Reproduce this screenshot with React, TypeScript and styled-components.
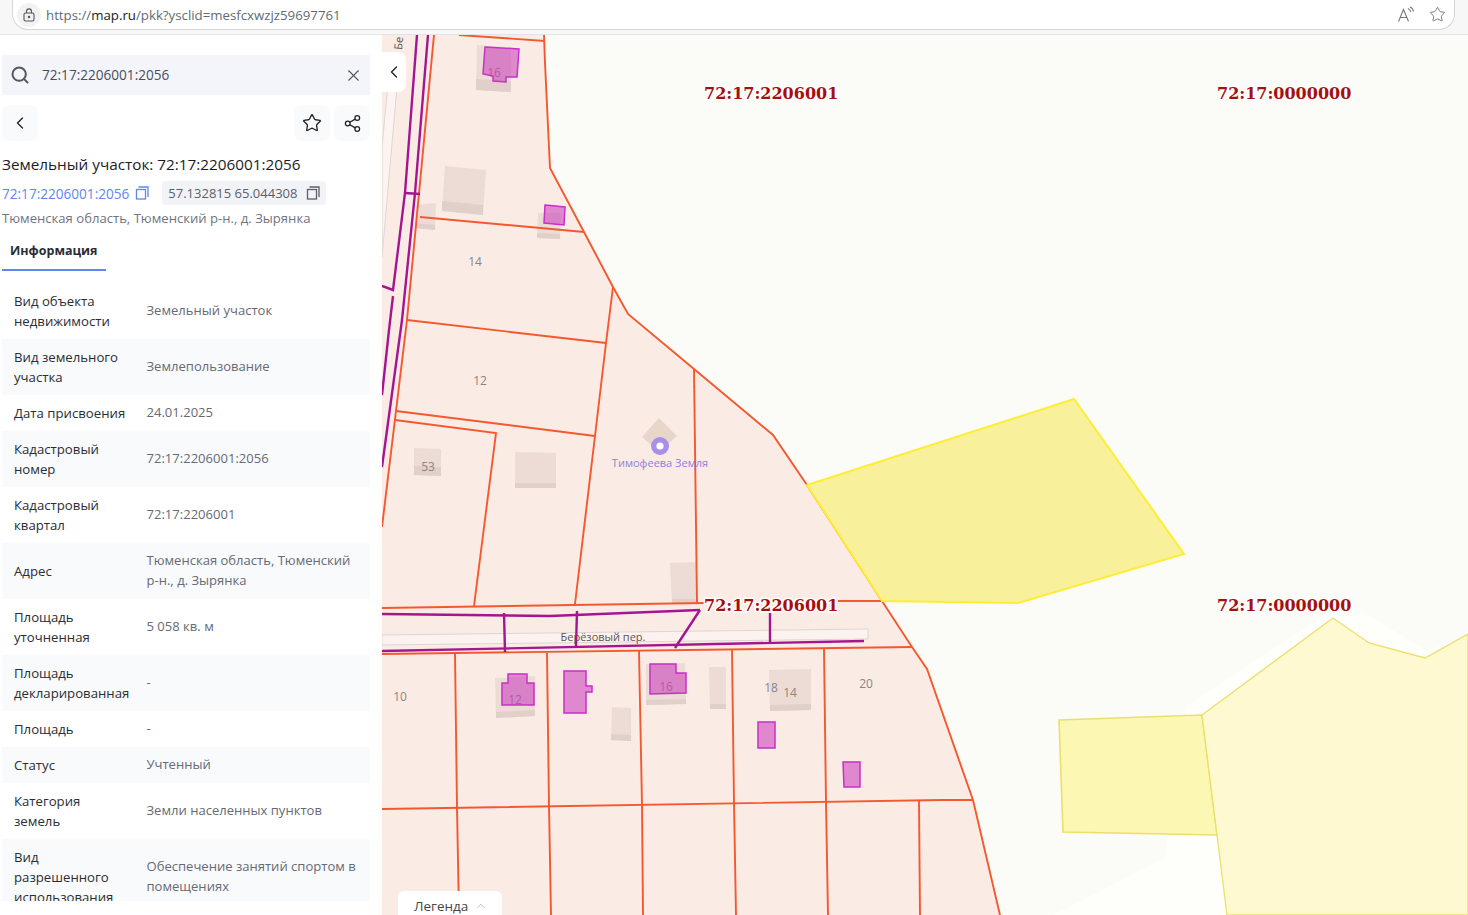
import React from "react";
import styled, { createGlobalStyle } from "styled-components";
import { ChevronLeft, ChevronUp, Search, Share2, Star, X } from "lucide-react";

const PANEL_FONT = `"Open Sans", "Noto Sans", sans-serif`;

const ORANGE_LINES = [
    "544,35 545,63 550,168 584,232 613,287 628,314 694,369 773,435 807,485 882,601 912,647 927,669 973,800 1000,915",
    "459,35 545,41",
    "434,35 407,320 396,411 382,527",
    "420,217 584,232",
    "613,287 606,343 595,436 575,604",
    "407,320 606,343",
    "396,411 595,436",
    "395,420 496,433 474,606",
    "694,369 697,603",
    "382,608 704,603",
    "838,601 881,601",
    "382,654 912,647",
    "382,809 942,800 973,800",
    "455,654 457,807 459,915",
    "547,653 549,806 551,915",
    "639,651 642,805 643,915",
    "732,650 734,803 736,915",
    "824,649 826,802 828,915",
    "919,801 920,915",
];

const PURPLE_LINES = [
    "417,35 405,193 393,290 382,286",
    "393,296 389,330 382,395",
    "428,35 415,193 402,320 382,467",
    "405,193 420,194",
    "382,614 550,616 700,610",
    "382,651 864,641",
    "504,613 505,652",
    "577,611 576,646",
    "770,613 770,642",
    "700,610 675,648",
];

const BUILDINGS = [
    { pts: [[477, 45], [511, 47], [511, 92], [476, 90]], strip: 11 },
    { pts: [[445, 166], [486, 170], [483, 215], [442, 211]], strip: 10 },
    { pts: [[416, 205], [436, 203], [435, 230], [415, 228]], strip: 5 },
    { pts: [[538, 213], [561, 213], [560, 239], [537, 238]], strip: 5 },
    { pts: [[414, 448], [441, 449], [441, 476], [414, 475]], strip: 9 },
    { pts: [[515, 452], [556, 453], [556, 488], [515, 488]], strip: 5 },
    { pts: [[670, 563], [696, 562], [697, 603], [672, 603]], strip: 4 },
    { pts: [[495, 678], [535, 676], [535, 716], [496, 718]], strip: 6 },
    { pts: [[612, 707], [631, 708], [631, 741], [611, 740]], strip: 6 },
    { pts: [[646, 664], [685, 663], [686, 704], [646, 705]], strip: 5 },
    { pts: [[709, 667], [726, 667], [726, 709], [710, 709]], strip: 5 },
    { pts: [[769, 670], [811, 669], [811, 710], [770, 711]], strip: 6 },
];

const PURPLE_SHAPES = [
    "485,47 519,49 517,77 506,77 506,82 493,81 493,76 483,74",
    "545,205 565,207 564,225 544,223",
    "508,674 527,674 527,683 534,683 534,705 502,705 502,683 508,683",
    "564,671 586,671 586,686 592,686 592,692 586,692 586,713 564,713",
    "650,664 676,664 676,673 686,673 686,693 650,694",
    "758,722 775,722 775,748 758,748",
    "843,762 860,762 860,787 844,787",
];

const HOUSE_NUMBERS = [
    { x: 494, y: 77, t: "16" },
    { x: 475, y: 266, t: "14" },
    { x: 480, y: 385, t: "12" },
    { x: 428, y: 471, t: "53" },
    { x: 400, y: 701, t: "10" },
    { x: 515, y: 704, t: "12" },
    { x: 666, y: 691, t: "16" },
    { x: 771, y: 692, t: "18" },
    { x: 790, y: 697, t: "14" },
    { x: 866, y: 688, t: "20" },
];

const QUARTER_LABELS = [
    { x: 704, y: 99, t: "72:17:2206001" },
    { x: 1217, y: 99, t: "72:17:0000000" },
    { x: 704, y: 611, t: "72:17:2206001" },
    { x: 1217, y: 611, t: "72:17:0000000" },
];

const INFO_ROWS = [
    { label: "Вид объекта недвижимости", value: "Земельный участок" },
    { label: "Вид земельного участка", value: "Землепользование" },
    { label: "Дата присвоения", value: "24.01.2025" },
    { label: "Кадастровый номер", value: "72:17:2206001:2056" },
    { label: "Кадастровый квартал", value: "72:17:2206001" },
    { label: "Адрес", value: "Тюменская область, Тюменский р-н., д. Зырянка" },
    { label: "Площадь уточненная", value: "5 058 кв. м" },
    { label: "Площадь декларированная", value: "-" },
    { label: "Площадь", value: "-" },
    { label: "Статус", value: "Учтенный" },
    { label: "Категория\nземель", value: "Земли населенных пунктов" },
    { label: "Вид\nразрешенного\nиспользования", value: "Обеспечение занятий спортом в помещениях" },
];

const CopyIcon = () => (
    <svg width="14" height="14" viewBox="0 0 14 14" fill="none" stroke="currentColor" strokeWidth="1.3">
        <rect x="1.5" y="3.5" width="9" height="9.5" />
        <path d="M3.5 1h9.5v10" />
    </svg>
);

const ReadAloudIcon = () => (
    <svg width="18" height="18" viewBox="0 0 18 18" fill="none" stroke="#777" strokeWidth="1.1">
        <path d="M1.5 15.5 6.5 3.5 11.5 15.5M3.2 11.5h6.6" />
        <path d="M11 2.5c1.5.5 2.5 2 2.7 3.5M13 1c2 .8 3.3 2.5 3.5 4.5" />
    </svg>
);

const LockIcon = () => (
    <svg width="14" height="14" viewBox="0 0 14 14" fill="none" stroke="#555" strokeWidth="1.1">
        <rect x="2" y="5" width="10" height="8" rx="1.5" />
        <path d="M4.5 5V3.4a2.5 2.5 0 0 1 5 0V5" />
        <circle cx="7" cy="9" r="0.7" fill="#555" />
    </svg>
);

const MapCanvas = () => (
    <MapSvg viewBox="382 35 1086 880">
        <rect x="382" y="35" width="1086" height="880" fill="#fbfcf7" />
        <polygon
            points="1186,706 1340,605 1352,605 1425,650 1468,640 1468,915 1053,915 1165,858"
            fill="#fefefa"
        />
        <polygon
            points="382,35 544,35 545,63 550,168 584,232 613,287 628,314 694,369 773,435 807,485 882,601 912,647 927,669 973,800 1000,915 382,915"
            fill="#fbebe5"
        />
        <polygon
            points="397,87 382,257 382,147 389,73"
            fill="#fdf3f0"
            stroke="#ddd6d2"
            strokeWidth="1"
        />
        <polygon
            points="382,635 868,629 868,639 382,645"
            fill="#fcf2ef"
            stroke="#ddd6d2"
            strokeWidth="1"
        />
        {BUILDINGS.map(({ pts, strip }, i) => {
            const [, , c, d] = pts;
            return (
                <g key={i}>
                    <polygon points={pts.map((p) => p.join(",")).join(" ")} fill="#ecdcd5" />
                    <polygon
                        points={`${d[0]},${d[1] - strip} ${c[0]},${c[1] - strip} ${c[0]},${c[1]} ${d[0]},${d[1]}`}
                        fill="#e0d0c9"
                    />
                </g>
            );
        })}
        <polygon points="659,418 677,436 659,452 642,437" fill="#e9d6ca" />
        {ORANGE_LINES.map((pts) => (
            <polyline key={pts} points={pts} fill="none" stroke="#f4582f" strokeWidth="1.9" />
        ))}
        <polygon
            points="807,485 1074,399 1184,554 1018,603 882,601"
            fill="#f9f09b"
            stroke="#fdee32"
            strokeWidth="2"
        />
        <polygon
            points="1059,720 1202,715 1217,835 1063,832"
            fill="#fcf7b3"
            stroke="#ecdf6c"
            strokeWidth="1.6"
        />
        <polygon
            points="1202,715 1333,618 1369,643 1425,658 1468,634 1468,915 1227,915"
            fill="#fef9d0"
            stroke="#ecdf6c"
            strokeWidth="1.3"
        />
        {PURPLE_LINES.map((pts) => (
            <polyline key={pts} points={pts} fill="none" stroke="#a3168f" strokeWidth="2.4" />
        ))}
        {HOUSE_NUMBERS.map((n) => (
            <HouseNumber key={`${n.x}-${n.y}`} x={n.x} y={n.y} textAnchor="middle">
                {n.t}
            </HouseNumber>
        ))}
        {PURPLE_SHAPES.map((pts) => (
            <polygon key={pts} points={pts} fill="#cc3fbb" fillOpacity="0.58" stroke="#c92fc9" strokeWidth="1.5" />
        ))}
        <StreetName x="603" y="641" textAnchor="middle">
            Берёзовый пер.
        </StreetName>
        <StreetName x="402" y="50" transform="rotate(-85 402 50)">
            Бе
        </StreetName>
        <circle cx="660" cy="446" r="9" fill="#a88fe8" />
        <circle cx="660" cy="446" r="3.6" fill="#fff" />
        <PlaceName x="660" y="467" textAnchor="middle">
            Тимофеева Земля
        </PlaceName>
        {QUARTER_LABELS.map((l) => (
            <QuarterLabel key={`${l.x}-${l.y}`} x={l.x} y={l.y}>
                {l.t}
            </QuarterLabel>
        ))}
    </MapSvg>
);

export default function App() {
    return (
        <>
            <GlobalStyle />
            <Page>
                <BrowserBar>
                    <AddressPill>
                        <LockBadge>
                            <LockIcon />
                        </LockBadge>
                        <UrlText>
                            https://<UrlHost>map.ru</UrlHost>/pkk?ysclid=mesfcxwzjz59697761
                        </UrlText>
                        <PillActions>
                            <ReadAloudIcon />
                            <Star size={17} strokeWidth={1.2} color="#666" />
                        </PillActions>
                    </AddressPill>
                </BrowserBar>
                <Content>
                    <Sidebar>
                        <SearchBox>
                            <Search size={20} strokeWidth={2.4} color="#55585f" />
                            <SearchValue>72:17:2206001:2056</SearchValue>
                            <X size={19} strokeWidth={1.4} color="#55585f" />
                        </SearchBox>
                        <ActionRow>
                            <IconButton>
                                <ChevronLeft size={20} strokeWidth={1.6} />
                            </IconButton>
                            <ActionGroup>
                                <IconButton>
                                    <Star size={20} strokeWidth={1.6} />
                                </IconButton>
                                <IconButton>
                                    <Share2 size={19} strokeWidth={1.6} />
                                </IconButton>
                            </ActionGroup>
                        </ActionRow>
                        <Title>Земельный участок: 72:17:2206001:2056</Title>
                        <MetaRow>
                            <CadastreLink>
                                72:17:2206001:2056
                                <CopyIcon />
                            </CadastreLink>
                            <CoordsChip>
                                57.132815 65.044308
                                <CopyIcon />
                            </CoordsChip>
                        </MetaRow>
                        <AddressLine>Тюменская область, Тюменский р-н., д. Зырянка</AddressLine>
                        <TabBar>
                            <ActiveTab>Информация</ActiveTab>
                        </TabBar>
                        <InfoTable>
                            {INFO_ROWS.map((row, i) => (
                                <InfoRow key={row.label} $striped={i % 2 === 1}>
                                    <InfoLabel>{row.label}</InfoLabel>
                                    <InfoValue>{row.value}</InfoValue>
                                </InfoRow>
                            ))}
                        </InfoTable>
                    </Sidebar>
                    <MapArea>
                        <MapCanvas />
                        <CollapseButton>
                            <ChevronLeft size={20} strokeWidth={1.6} color="#222" />
                        </CollapseButton>
                        <LegendTab>
                            Легенда
                            <ChevronUp size={14} strokeWidth={1.6} color="#b4bccb" />
                        </LegendTab>
                    </MapArea>
                </Content>
            </Page>
        </>
    );
}

const GlobalStyle = createGlobalStyle`
    html, body {
        margin: 0;
        height: 100%;
        overflow: hidden;
        background: #fff;
    }
    #root {
        height: 100%;
    }
`;

const Page = styled.div`
    display: flex;
    flex-direction: column;
    height: 915px;
    font-family: ${PANEL_FONT};
`;

const BrowserBar = styled.div`
    height: 35px;
    flex: none;
    padding: 0 13px 4px 12px;
    box-sizing: border-box;
    background: #f7f7f7;
    border-bottom: 1px solid #e4e4e4;
    display: flex;
`;

const AddressPill = styled.div`
    flex: 1;
    display: flex;
    align-items: center;
    background: #fff;
    border: 1px solid #d6d6d6;
    border-top: none;
    border-radius: 0 0 16px 16px;
    padding: 0 8px 0 4px;
`;

const LockBadge = styled.div`
    width: 24px;
    height: 24px;
    border-radius: 50%;
    background: #f2f2f2;
    display: flex;
    align-items: center;
    justify-content: center;
`;

const UrlText = styled.div`
    margin-left: 5px;
    flex: 1;
    font-size: 13.25px;
    color: #5f6b76;
    font-family: "Open Sans", sans-serif;
`;

const UrlHost = styled.span`
    color: #1b1b1b;
`;

const PillActions = styled.div`
    display: flex;
    align-items: center;
    gap: 14px;
`;

const Content = styled.div`
    flex: 1;
    display: flex;
    min-height: 0;
`;

const Sidebar = styled.aside`
    width: 382px;
    flex: none;
    box-sizing: border-box;
    padding: 20px 12px 0 2px;
    display: flex;
    flex-direction: column;
    background: #fff;
`;

const SearchBox = styled.div`
    height: 40px;
    flex: none;
    background: #f3f5fb;
    display: flex;
    align-items: center;
    padding: 0 7px 0 8px;
`;

const SearchValue = styled.div`
    flex: 1;
    margin-left: 12px;
    padding-bottom: 2px;
    font-size: 13.6px;
    color: #4a4e57;
`;

const ActionRow = styled.div`
    margin-top: 10px;
    display: flex;
    justify-content: space-between;
`;

const ActionGroup = styled.div`
    display: flex;
    gap: 4px;
`;

const IconButton = styled.button`
    width: 36px;
    height: 36px;
    padding: 0;
    border: none;
    border-radius: 8px;
    background: #f9fafc;
    color: #222;
    display: flex;
    align-items: center;
    justify-content: center;
`;

const Title = styled.div`
    margin-top: 12px;
    height: 22px;
    line-height: 22px;
    font-size: 15.3px;
    color: #1c1c1f;
    white-space: nowrap;
`;

const MetaRow = styled.div`
    margin-top: 6px;
    height: 24px;
    display: flex;
    align-items: center;
    gap: 13px;
`;

const CadastreLink = styled.span`
    display: flex;
    align-items: center;
    gap: 6px;
    font-size: 13.6px;
    color: #5f86f2;
`;

const CoordsChip = styled.span`
    display: flex;
    align-items: center;
    gap: 9px;
    height: 24px;
    padding: 0 6px;
    border-radius: 4px;
    background: #f2f3f7;
    font-size: 13px;
    color: #5b5f69;
`;

const AddressLine = styled.div`
    margin-top: 3px;
    height: 20px;
    line-height: 20px;
    font-size: 13.1px;
    color: #70747d;
    white-space: nowrap;
`;

const TabBar = styled.div`
    margin-top: 4px;
    display: flex;
`;

const ActiveTab = styled.div`
    width: 104px;
    height: 39px;
    box-sizing: border-box;
    padding: 10px 0 0 8px;
    font-size: 12.5px;
    font-weight: 700;
    color: #2a2d34;
    border-bottom: 2px solid #5f86f2;
`;

const InfoTable = styled.div`
    margin-top: 12px;
    height: 618px;
    overflow: hidden;
    flex: none;
`;

const InfoRow = styled.div<{ $striped: boolean }>`
    display: grid;
    grid-template-columns: 132.5px 1fr;
    align-items: center;
    padding: 8px 12px;
    background: ${(props) => (props.$striped ? "#f9fafc" : "#fff")};
`;

const InfoLabel = styled.div`
    font-size: 13.2px;
    line-height: 20px;
    color: #2a2d34;
    padding-right: 8px;
    white-space: pre-line;
`;

const InfoValue = styled.div`
    font-size: 13.05px;
    line-height: 20px;
    color: #666a74;
    transform: translateY(-1px);
`;

const MapArea = styled.main`
    position: relative;
    flex: 1;
    overflow: hidden;
`;

const MapSvg = styled.svg`
    display: block;
    width: 1086px;
    height: 880px;
`;

const HouseNumber = styled.text`
    font-family: "Open Sans", sans-serif;
    font-size: 12px;
    fill: #8c8482;
`;

const StreetName = styled.text`
    font-family: "Open Sans", sans-serif;
    font-size: 11px;
    fill: #5a5553;
`;

const PlaceName = styled.text`
    font-family: "Open Sans", sans-serif;
    font-size: 11px;
    fill: #8f7fe0;
`;

const QuarterLabel = styled.text`
    font-family: "DejaVu Serif", serif;
    font-weight: 700;
    font-size: 16px;
    fill: #a50f0f;
    stroke: #fff;
    stroke-width: 3px;
    paint-order: stroke;
`;

const CollapseButton = styled.div`
    position: absolute;
    left: 0;
    top: 17px;
    width: 24px;
    height: 40px;
    background: #fff;
    border-radius: 0 8px 8px 0;
    display: flex;
    align-items: center;
    justify-content: center;
`;

const LegendTab = styled.div`
    position: absolute;
    left: 16px;
    bottom: 0;
    width: 104px;
    height: 24px;
    box-sizing: border-box;
    padding: 6px 0 0 16px;
    background: #fff;
    border-radius: 6px 6px 0 0;
    display: flex;
    align-items: center;
    gap: 6px;
    font-size: 13.5px;
    color: #454545;
`;
